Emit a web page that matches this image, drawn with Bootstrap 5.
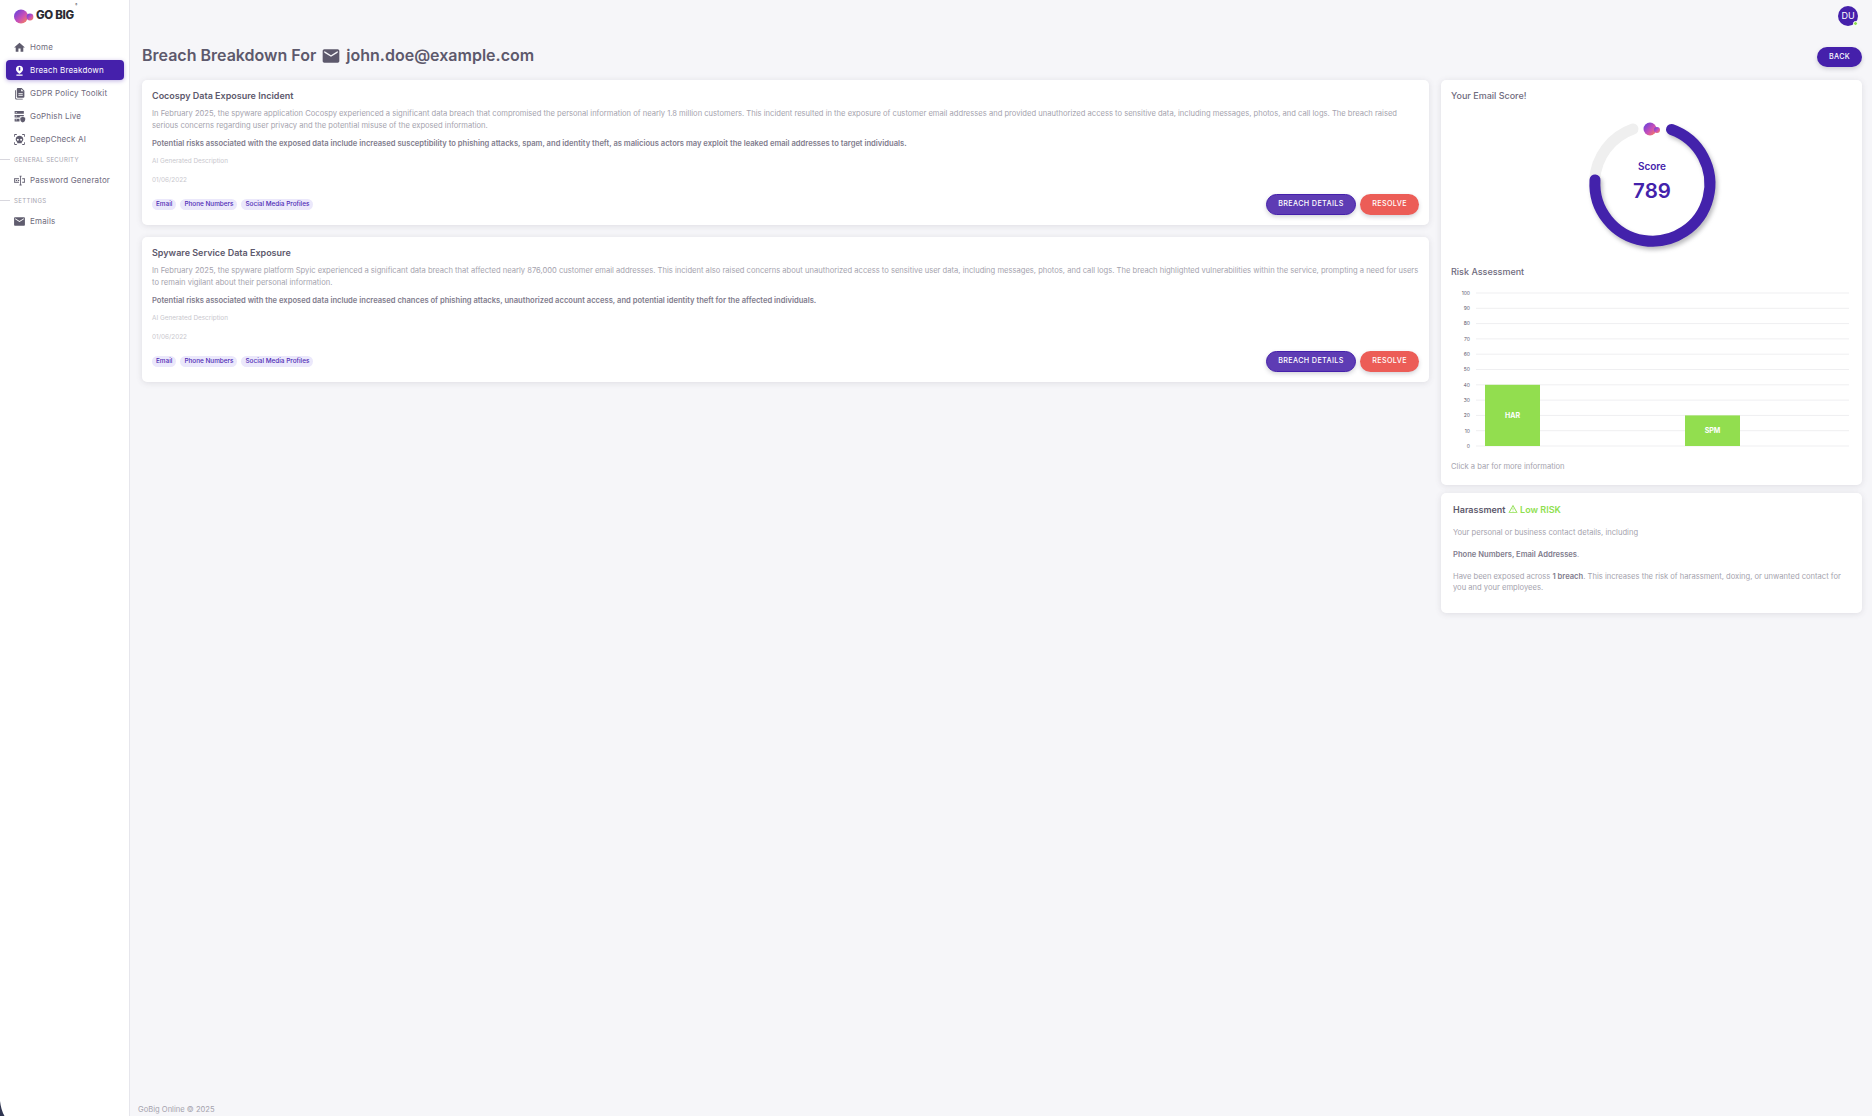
<!DOCTYPE html>
<html lang="en">
<head>
    <meta charset="UTF-8">
    <title>Breach Breakdown</title>
    <link href="https://cdn.jsdelivr.net/npm/bootstrap@5.3.0/dist/css/bootstrap.min.css" rel="stylesheet">
    <style>
        body { font-family: Inter, "Noto Sans", sans-serif; background: #f6f6f9; color: #6f6b7d; font-size: 7.6px; }
        .app-shell { min-height: 1116px; height: 1116px; overflow: hidden; }
        .side { width: 130px; flex: none; background: #fff; border-right: 1px solid #e6e6ec; padding: 9px 5px 0 0; position: relative; }
        .brand { height: 16px; padding-left: 14px; margin-top: -1px; margin-bottom: 13px; }
        .brand-name { font-size: 11.5px; font-weight: 800; color: #2b2b33; letter-spacing: -.3px; margin-left: 2px; position: relative; }
        .brand-name sup { position: absolute; right: -3px; top: -2px; font-size: 3px; font-weight: 400; }
        .side-link { height: 20px; margin: 0 0 3px 6px; padding-left: 7px; gap: 4px; border-radius: 4px; color: #6f6b7d; font-size: 8px; letter-spacing: .02em; text-decoration: none; }
        .side-link svg { width: 13px; height: 13px; flex: none; fill: #5f5c6e; }
        .side-link.is-on { background: #4520ab; color: #fff; box-shadow: 0 1px 4px rgba(69,32,171,.35); }
        .side-link.is-on svg { fill: #fff; }
        .side-head { height: 16px; font-size: 6px; letter-spacing: .06em; color: #a5a3ae; gap: 4px; margin-top: -1px; margin-bottom: 3px; text-transform: uppercase; }
        .side-head::before { content: ""; width: 10px; height: 1px; background: #d8d7de; }
        .corner-mark { position: absolute; left: 0; bottom: 0; display: block; }
        .content { min-width: 0; padding: 6px 10px 0 12px; }
        .avatar { width: 20px; height: 20px; border-radius: 50%; background: #4520ab; color: #fff; font-size: 9px; position: relative; }
        .avatar::after { content: ""; position: absolute; right: 0; bottom: 0; width: 5px; height: 5px; border-radius: 50%; background: #8fdf4f; border: 1px solid #fff; }
        .title-row { margin-top: 17px; margin-bottom: 12px; height: 25px; }
        .page-title { font-size: 16px; font-weight: 600; color: #5d596c; margin: 0; gap: 5px; }
        .page-title svg { width: 20px; height: 20px; fill: #5d596c; }
        .pill { border: 0; border-radius: 11px; color: #fff; font-size: 7.2px; font-weight: 500; letter-spacing: .05em; line-height: 1; box-shadow: 0 2px 4px rgba(60,60,80,.22); }
        .pill-back { width: 45px; height: 20px; background: #4520ab; margin-top: 3px; }
        .pill-details { width: 90px; height: 21px; background: #5e3cb4; border: 1px solid #4520ab; }
        .pill-resolve { width: 59px; height: 21px; background: #ec5d57; }
        .body-row { column-gap: 12px; }
        .left-col { flex: 1 1 0; min-width: 0; gap: 12px; }
        .right-col { width: 421px; flex: none; gap: 8px; }
        .sheet { background: #fff; border: 0; border-radius: 5px; box-shadow: 0 1px 6px rgba(75,70,92,.14); }
        .breach { padding: 10px 10px 11px; height: 145px; }
        .breach-title { font-size: 9px; font-weight: 600; line-height: 12px; color: #5d596c; margin: 0 0 6px; }
        .breach-text { line-height: 11.5px; color: #a5a3ae; margin: 0 0 7px; }
        .breach-risk { line-height: 11.5px; color: #7f7c8d; font-weight: 600; margin: 0 0 6px; }
        .faint { font-size: 6.4px; line-height: 10px; color: #c9c8ce; margin: 0 0 9px; }
        .tag { height: 11px; padding: 0 4px; border-radius: 6px; background: #ebe8fb; color: #4f2bb5; font-size: 6.4px; font-weight: 500; line-height: 11px; }
        .score-card { height: 405px; padding: 10px; }
        .small-head { font-size: 9px; line-height: 12px; color: #6f6b7d; margin: 0; }
        .ring-wrap { margin: 12px auto 0; width: 140px; height: 140px; }
        .ring-arc { filter: drop-shadow(2px 3px 2px rgba(60,60,70,.35)); }
        .risk-head { margin-top: 12px; }
        .bar-chart { display: block; width: 401px; height: 170px; margin-top: 8px; }
        .hint { color: #a5a3ae; line-height: 12px; margin: 5px 0 0; }
        .detail-card { height: 120px; padding: 11px 12px; }
        .detail-title { font-size: 9px; font-weight: 600; line-height: 12px; color: #5d596c; margin: 0 0 11px; }
        .detail-title span { color: #8fdf4f; }
        .detail-title svg { width: 10px; height: 10px; fill: #8fdf4f; vertical-align: -1px; }
        .detail-card p { line-height: 11px; color: #a5a3ae; margin: 0 0 11px; }
        .detail-card b { color: #7f7c8d; font-weight: 600; }
        .foot { color: #a5a3ae; line-height: 10px; margin: auto 0 1px -4px; }
    </style>
</head>
<body>
<svg width="0" height="0" class="position-absolute">
    <defs>
        <linearGradient id="orb" x1="0" y1="0" x2="1" y2="1">
            <stop offset="0" stop-color="#5a3fe0"/>
            <stop offset=".55" stop-color="#c94fb8"/>
            <stop offset="1" stop-color="#ff8a4a"/>
        </linearGradient>
    </defs>
</svg>
<div class="app-shell d-flex">
    <aside class="side">
        <div class="brand d-flex align-items-center">
            <svg width="20" height="15" viewBox="0 0 20 15"><circle cx="7" cy="7.500" r="7" fill="url(#orb)"/><circle cx="16" cy="8" r="3.400" fill="url(#orb)"/></svg>
            <span class="brand-name">GO BIG<sup>®</sup></span>
        </div>
        <a class="side-link d-flex align-items-center" href="#"><svg viewBox="0 0 24 24"><path d="M10 20v-6h4v6h5v-8h3L12 3 2 12h3v8z"/></svg>Home</a>
        <a class="side-link is-on d-flex align-items-center" href="#"><svg viewBox="0 0 24 24"><path d="M12 3a6.500 6.500 0 0 0-6.500 6.500C5.500 14 12 18 12 18s6.500-4 6.500-8.500A6.500 6.500 0 0 0 12 3zm0 2.500 2 1.500-1 2 1 2-2 1.500-2-1.500 1-2-1-2z"/><rect x="6" y="19.500" width="12" height="2" rx="1"/></svg>Breach Breakdown</a>
        <a class="side-link d-flex align-items-center" href="#"><svg viewBox="0 0 24 24"><path d="M9 2h7l5 5v11a2 2 0 0 1-2 2H9a2 2 0 0 1-2-2V4a2 2 0 0 1 2-2zm1 9v1.500h8V11zm0 3.500V16h8v-1.500zM15 3.500V8h4.500z"/><path d="M4 6h1.500v14a1.500 1.500 0 0 0 1.500 1.500h11V23H6a2 2 0 0 1-2-2z"/></svg>GDPR Policy Toolkit</a>
        <a class="side-link d-flex align-items-center" href="#"><svg viewBox="0 0 24 24"><path d="M3 2h17v5H3zm0 7h17v2.500h-7.500V14H3zm0 7h9v5H3zm2-12.500V5h2V3.500zm0 7V12h2v-1.500zm0 7V19h2v-1.500z"/><path d="M18 12.500l4.500 1.800v3.200c0 2.700-2 4.700-4.500 5.500-2.500-.8-4.500-2.800-4.500-5.500v-3.200z"/></svg>GoPhish Live</a>
        <a class="side-link d-flex align-items-center" href="#"><svg viewBox="0 0 24 24"><path d="M2 7V3.500A1.500 1.500 0 0 1 3.500 2H7v1.500H3.500V7zm15-5h3.500A1.500 1.500 0 0 1 22 3.500V7h-1.500V3.500H17zM2 17h1.500v3.500H7V22H3.500A1.500 1.500 0 0 1 2 20.500zm18.500 0H22v3.500a1.500 1.500 0 0 1-1.500 1.500H17v-1.500h3.500z"/><path d="M12 5c-3.900 0-7 2.800-7 6.500 0 2.200 1.100 4 2.800 5.100V19h8.400v-2.400c1.700-1.100 2.800-2.900 2.800-5.100C19 7.800 15.900 5 12 5zm-3 5.500a1.800 1.800 0 1 1 0 3.600 1.800 1.800 0 0 1 0-3.600zm6 0a1.800 1.800 0 1 1 0 3.600 1.800 1.800 0 0 1 0-3.600z"/></svg>DeepCheck AI</a>
        <div class="side-head d-flex align-items-center">General Security</div>
        <a class="side-link d-flex align-items-center" href="#"><svg viewBox="0 0 24 24"><path d="M2 8h9v1.500H3.500v5H11V16H2zm15 0h5v8h-5v-1.500h3.500v-5H17zM12 3h4v1.500h-1.200v15H16V21h-4v-1.500h1.200v-15H12zM5 11h2.500v2H5zm4 0h2.500v2H9z"/></svg>Password Generator</a>
        <div class="side-head d-flex align-items-center">Settings</div>
        <a class="side-link d-flex align-items-center" href="#"><svg viewBox="0 0 24 24"><path d="M20 4H4c-1.100 0-2 .9-2 2v12c0 1.100.9 2 2 2h16c1.100 0 2-.9 2-2V6c0-1.100-.9-2-2-2zm0 4l-8 5-8-5V6l8 5 8-5v2z"/></svg>Emails</a>
        <svg class="corner-mark" width="5" height="15" viewBox="0 0 5 15"><path d="M0 0 Q1 9 4.500 15 L0 15Z" fill="#2f3550"/></svg>
    </aside>

    <main class="content flex-grow-1 d-flex flex-column">
        <div class="d-flex justify-content-end pe-1">
            <div class="avatar d-flex align-items-center justify-content-center">DU</div>
        </div>
        <div class="title-row d-flex align-items-center justify-content-between">
            <h1 class="page-title d-flex align-items-center">Breach Breakdown For
                <svg viewBox="0 0 24 24"><path d="M20 4H4c-1.100 0-2 .9-2 2v12c0 1.100.9 2 2 2h16c1.100 0 2-.9 2-2V6c0-1.100-.9-2-2-2zm0 4l-8 5-8-5V6l8 5 8-5v2z"/></svg>
                john.doe@example.com</h1>
            <button class="pill pill-back" type="button">BACK</button>
        </div>

        <div class="body-row d-flex align-items-start flex-grow-1">
            <div class="left-col d-flex flex-column">
                <section class="sheet breach">
                    <h2 class="breach-title">Cocospy Data Exposure Incident</h2>
                    <p class="breach-text">In February 2025, the spyware application Cocospy experienced a significant data breach that compromised the personal information of nearly 1.8 million customers. This incident resulted in the exposure of customer email addresses and provided unauthorized access to sensitive data, including messages, photos, and call logs. The breach raised serious concerns regarding user privacy and the potential misuse of the exposed information.</p>
                    <p class="breach-risk">Potential risks associated with the exposed data include increased susceptibility to phishing attacks, spam, and identity theft, as malicious actors may exploit the leaked email addresses to target individuals.</p>
                    <p class="faint">AI Generated Description</p>
                    <p class="faint">01/06/2022</p>
                    <div class="d-flex align-items-center justify-content-between">
                        <div class="d-flex gap-1">
                            <span class="tag">Email</span><span class="tag">Phone Numbers</span><span class="tag">Social Media Profiles</span>
                        </div>
                        <div class="d-flex gap-1">
                            <button class="pill pill-details" type="button">BREACH DETAILS</button>
                            <button class="pill pill-resolve" type="button">RESOLVE</button>
                        </div>
                    </div>
                </section>
                <section class="sheet breach">
                    <h2 class="breach-title">Spyware Service Data Exposure</h2>
                    <p class="breach-text">In February 2025, the spyware platform Spyic experienced a significant data breach that affected nearly 876,000 customer email addresses. This incident also raised concerns about unauthorized access to sensitive user data, including messages, photos, and call logs. The breach highlighted vulnerabilities within the service, prompting a need for users to remain vigilant about their personal information.</p>
                    <p class="breach-risk">Potential risks associated with the exposed data include increased chances of phishing attacks, unauthorized account access, and potential identity theft for the affected individuals.</p>
                    <p class="faint">AI Generated Description</p>
                    <p class="faint">01/06/2022</p>
                    <div class="d-flex align-items-center justify-content-between">
                        <div class="d-flex gap-1">
                            <span class="tag">Email</span><span class="tag">Phone Numbers</span><span class="tag">Social Media Profiles</span>
                        </div>
                        <div class="d-flex gap-1">
                            <button class="pill pill-details" type="button">BREACH DETAILS</button>
                            <button class="pill pill-resolve" type="button">RESOLVE</button>
                        </div>
                    </div>
                </section>
            </div>

            <div class="right-col d-flex flex-column">
                <section class="sheet score-card">
                    <h2 class="small-head">Your Email Score!</h2>
                    <div class="ring-wrap">
                        <svg width="140" height="140" viewBox="0 0 140 140">
                            <path d="M12.700 66 A57.500 57.500 0 0 1 51 15" fill="none" stroke="#efefef" stroke-width="11" stroke-linecap="round"/>
                            <path class="ring-arc" d="M89.500 15.500 A57.500 57.500 0 1 1 13 66" fill="none" stroke="#4322ab" stroke-width="11" stroke-linecap="round"/>
                            <circle cx="68" cy="15" r="6.500" fill="url(#orb)"/>
                            <circle cx="75" cy="16" r="3" fill="url(#orb)"/>
                            <text x="70" y="56" text-anchor="middle" font-size="10" font-weight="600" fill="#4322ab">Score</text>
                            <text x="70" y="84" text-anchor="middle" font-size="20.500" font-weight="600" fill="#4322ab">789</text>
                        </svg>
                    </div>
                    <h2 class="small-head risk-head">Risk Assessment</h2>
                    <svg class="bar-chart" viewBox="0 0 401 170" id="risk-chart"></svg>
                    <p class="hint">Click a bar for more information</p>
                </section>
                <section class="sheet detail-card">
                    <h2 class="detail-title">Harassment <span><svg viewBox="0 0 24 24"><path d="M12 5.990L19.530 19H4.470L12 5.990M12 2L1 21h22L12 2zm1 14h-2v2h2v-2zm0-6h-2v4h2v-4z"/></svg> Low RISK</span></h2>
                    <p>Your personal or business contact details, including</p>
                    <p><b>Phone Numbers, Email Addresses</b>.</p>
                    <p>Have been exposed across <b>1 breach</b>. This increases the risk of harassment, doxing, or unwanted contact for you and your employees.</p>
                </section>
            </div>
        </div>
        <div class="foot">GoBig Online © 2025</div>
    </main>
</div>

<script src="https://cdn.jsdelivr.net/npm/bootstrap@5.3.0/dist/js/bootstrap.bundle.min.js"></script>
<script>
    // grid lines and ticks, then the two bars
    const chart = document.getElementById("risk-chart");
    let out = '';
    for (let v = 0; v <= 100; v += 10) {
        const y = 160 - v * 1.53;
        out += `<line x1="25" x2="398" y1="${y}" y2="${y}" stroke="#efeff1" stroke-width="1"/>`;
        out += `<text x="19" y="${y + 1.800}" text-anchor="end" font-size="5" fill="#5d596c">${v}</text>`;
    }
    const bars = [
        { label: 'HAR', x: 34, value: 40 },
        { label: 'SPM', x: 234, value: 20 }
    ];
    bars.forEach(b => {
        const h = b.value * 1.53;
        out += `<rect x="${b.x}" y="${160 - h}" width="55" height="${h}" fill="#92de4f"/>`;
        out += `<text x="${b.x + 27.500}" y="${160 - h / 2 + 2.500}" text-anchor="middle" font-size="7" font-weight="700" fill="#fff">${b.label}</text>`;
    });
    chart.innerHTML = out;
</script>
</body>
</html>
